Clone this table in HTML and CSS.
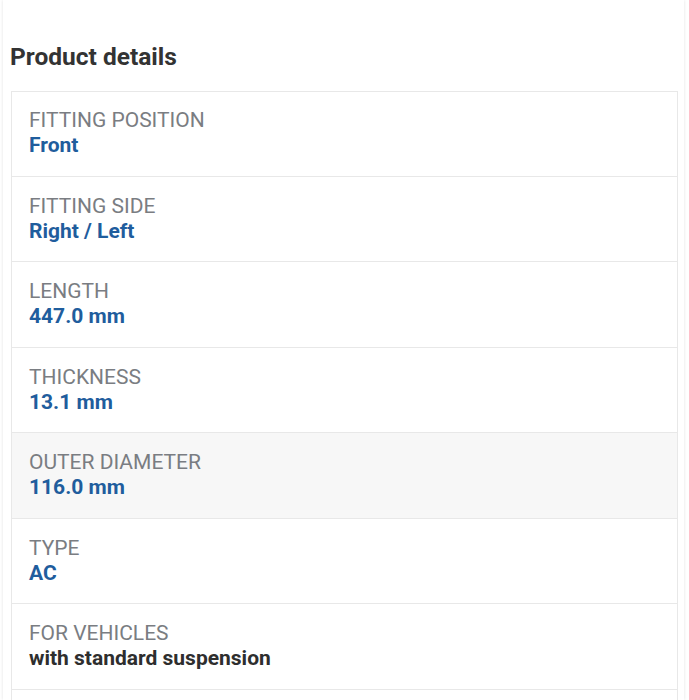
FILE: index.html
```html
<!DOCTYPE html>
<html>
<head>
<meta charset="utf-8">
<link rel="stylesheet" href="styles.css">
</head>
<body>
<div class="page">
  <h2 class="title">Product details</h2>
  <div class="details">
    <div class="row"><div class="label">FITTING POSITION</div><div class="value">Front</div></div>
    <div class="row"><div class="label">FITTING SIDE</div><div class="value">Right / Left</div></div>
    <div class="row"><div class="label">LENGTH</div><div class="value">447.0 mm</div></div>
    <div class="row"><div class="label">THICKNESS</div><div class="value">13.1 mm</div></div>
    <div class="row row-alt"><div class="label">OUTER DIAMETER</div><div class="value">116.0 mm</div></div>
    <div class="row"><div class="label">TYPE</div><div class="value">AC</div></div>
    <div class="row"><div class="label">FOR VEHICLES</div><div class="value value-dark">with standard suspension</div></div>
    <div class="row"><div class="label">&nbsp;</div><div class="value">&nbsp;</div></div>
  </div>
</div>
</body>
</html>
```
FILE: styles.css
```css
html, body {
  margin: 0;
  padding: 0;
  background: #fff;
}
body {
  font-family: Roboto, "Liberation Sans", sans-serif;
}
.page {
  box-sizing: border-box;
  height: 700px;
  overflow: hidden;
  margin: 0 5px 0 3px;
  padding: 42px 6px 0 8px;
  box-shadow: 0 0 3px rgba(0, 0, 0, 0.12);
  background: #fff;
}
.title {
  margin: 0 0 19px -1px;
  font-size: 24.5px;
  line-height: 30px;
  font-weight: 700;
  color: #333333;
}
.details {
  border: 1px solid #e8e8e8;
  border-bottom: none;
}
.row {
  padding: 17px 17px 17.5px;
  border-bottom: 1px solid #e8e8e8;
}
.row:first-child {
  padding-top: 16px;
}
.row-alt {
  background: #f7f7f7;
}
.label {
  font-size: 21px;
  line-height: 25px;
  color: #7a7d82;
}
.value {
  font-size: 21px;
  line-height: 25px;
  font-weight: 700;
  color: #1f5d9d;
}
.value-dark {
  color: #2e2e2e;
}
```
